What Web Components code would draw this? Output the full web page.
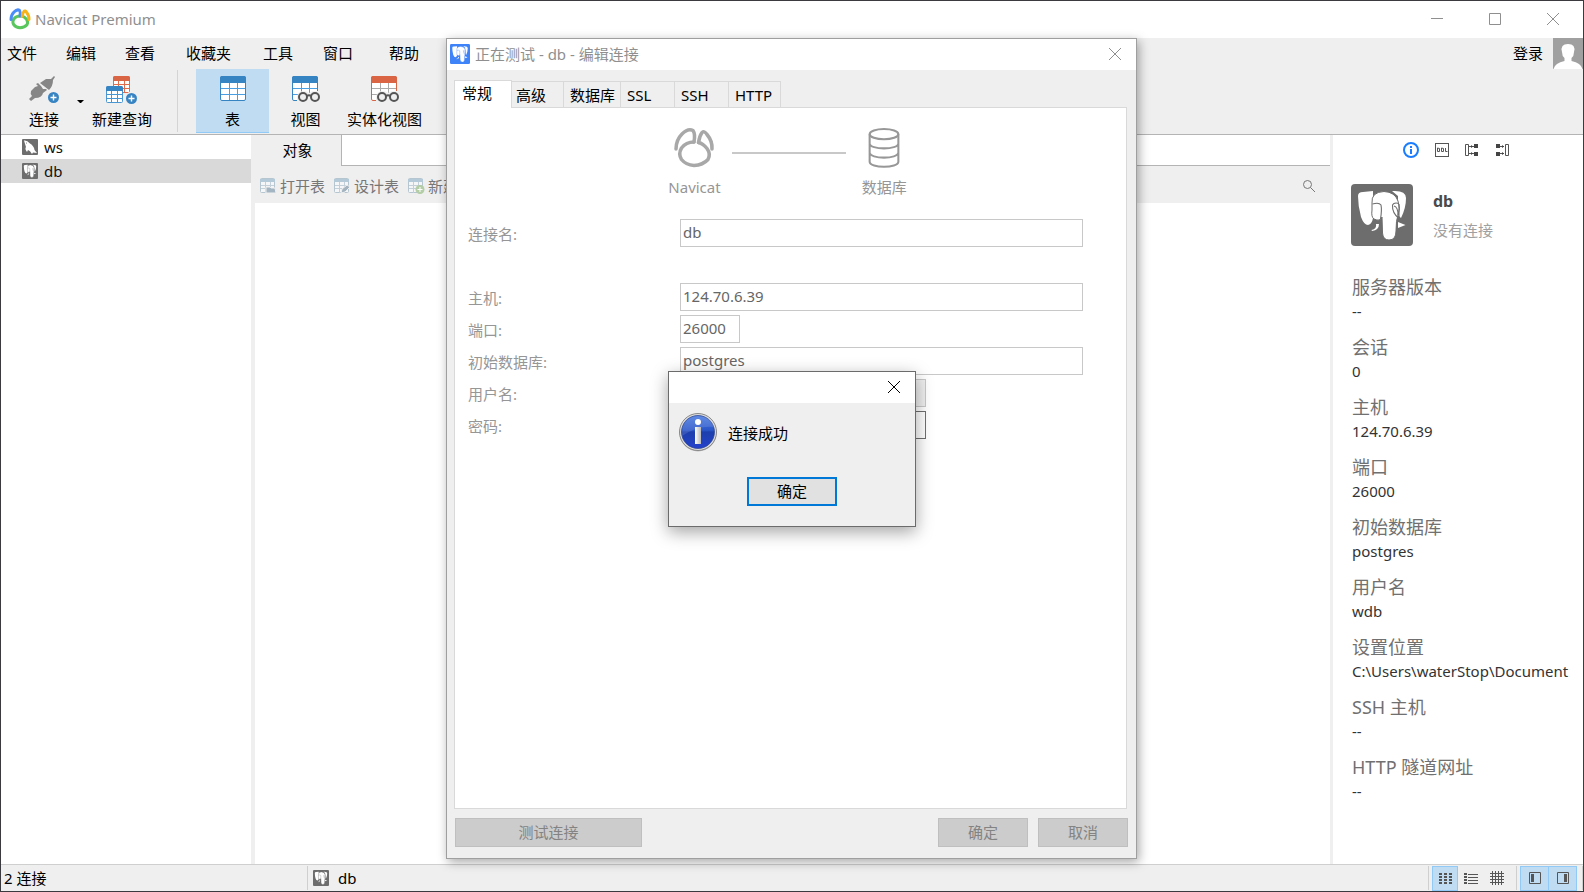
<!DOCTYPE html>
<html lang="zh-CN">
<head>
<meta charset="utf-8">
<title>Navicat Premium</title>
<style>
  html, body { margin: 0; height: 100%; }
  body { font: 15px/20px "Noto Sans", "Noto Sans CJK SC", sans-serif; color: #000; overflow: hidden; }
</style>
</head>
<body>
<app-window></app-window>
<script>
const define = (name, html, setup) => {
  const tpl = document.createElement('template');
  tpl.innerHTML = html;
  customElements.define(name, class extends HTMLElement {
    constructor() {
      super();
      this.attachShadow({ mode: 'open' }).append(tpl.content.cloneNode(true));
    }
    connectedCallback() { if (setup) setup(this, this.shadowRoot); }
  });
};

/* ---------- icons: [width, height, markup] ---------- */
const elephant = `
  <path fill="#fff" d="M7 12Q7 8 12 8L22 7L22 34Q21 40 17 41Q13 41 10 33Q7 22 7 12Z"/>
  <path fill="#fff" d="M41 7Q55 6 55 14Q55 24 50 34L47 31V12Z"/>
  <path fill="#fff" stroke="currentColor" stroke-width="1" d="M21 19Q20 8 33 7.500Q44 8 47 17Q50 25 47 31Q45 36 45 47Q45 56 38 56Q32 56 31.500 49L31 33Q29 38 23 35Q20 33 21 26Z"/>
  <path fill="none" stroke="currentColor" stroke-width="1.100" d="M21.500 20Q28 18 30 21Q31 26 29.500 35M48 19.500Q43 18 41.500 21Q41 29 48 34.500V20M43 22q4 1 4 9"/>
  <path fill="#fff" d="M25 40H28Q28 46 21 47L20.500 46Q26 45 25 40ZM47 38L54.500 41L47 44Z"/>`;
const table = (head, line, x, y, w, h) => `
  <rect x="${x + .5}" y="${y + .5}" width="${w - 1}" height="${h - 1}" rx="1" fill="#fff" stroke="${line}"/>
  <path fill="none" stroke="${line}" d="M${x} ${y + Math.round(h * .52) - .5}h${w}M${x} ${y + Math.round(h * .76) - .5}h${w}M${x + Math.round(w / 3) - .5} ${y + 3}v${h - 3}M${x + Math.round(w * .64) + .5} ${y + 3}v${h - 3}"/>
  <path fill="${head}" d="M${x} ${y + 5}V${y + 2}q0-2 2-2h${w - 4}q2 0 2 2v3z"/>`;
const plus = (x, y) => `<circle cx="${x}" cy="${y}" r="5.5" fill="#3784c3"/><path d="M${x - 3} ${y}h6M${x} ${y - 3}v6" stroke="#fff" stroke-width="1.4"/>`;
const glasses = `<g fill="#efefef" stroke="#555" stroke-width="2"><circle cx="11" cy="21" r="4"/><circle cx="23" cy="21" r="4"/><path d="M15 20q2-1.500 4 0" fill="none"/></g>`;
const view = (head, line, inner) => `
  <rect x=".5" y=".5" width="25" height="24" rx="1.500" fill="#fff" stroke="${line}"/>
  <path stroke="${inner}" fill="none" d="M1 12.500h24M1 18.500h24M9.500 7v18M17.500 7v18"/>
  <path fill="${head}" d="M0 7V2q0-2 2-2h22q2 0 2 2v5z"/>
  <path fill="#efefef" d="M5 21q1-6 6-6 4 0 6 2 2-2 6-2h5v12H5z"/>${glasses}`;
const grey = (extra) => `<rect x=".5" y=".5" width="14" height="14" rx="1" fill="#f4f6f7" stroke="#b6c6d0"/><path fill="#b4cad8" d="M0 1h15v3H0z"/><path fill="none" stroke="#c3d0d9" d="M1 7.500h13M1 10.500h13M5.500 4v11M10.500 4v11"/>${extra}`;
const swirl = (a, b, c, w) => `<g fill="none" stroke-width="${w}" stroke-linejoin="round" stroke-linecap="round">
  <path stroke="${c}" d="M20 14Q12 14 7.500 20Q4 26 7.500 31.500Q12 37 20 37.500Q29 37 34 31.500Q37 26 33 20.500Q29 15.500 24.500 14.500"/>
  <path stroke="${a}" d="M2 21Q2 12 8 6Q14 0 19 2.500Q21.500 6 20 14"/>
  <path stroke="${b}" d="M24.500 14.500Q25.500 8 28 4.500Q30.500 2.500 33 6.500Q38.500 13 38 21"/></g>`;
const ICONS = {
  '': [0, 0, ''],
  logo: [40, 40, swirl('#4a8df8', '#f7b318', '#58c65d', 6)],
  swirl: [40, 40, swirl('#a8a8a8', '#a8a8a8', '#a8a8a8', 3.5)],
  pg: [62, 62, `<rect width="62" height="62" rx="4" fill="currentColor"/>${elephant}`],
  mysql: [16, 16, `<rect width="16" height="16" rx="1" fill="#6d6d6d"/><path fill="#fff" d="M2 1.500Q5 1 8 4.500Q12 7 12.500 11L15 14L11 13.500L10 15Q8 11.500 6 11L5 13Q2.500 10 4 8Q3 5 2 1.500Z"/><circle cx="4.500" cy="4" r=".5" fill="#666"/>`],
  plug: [30, 28, `<g fill="#868686"><path d="M11 7L17 3L22 3L25 0L26 1L24 4Q24 10 20 14Z"/><path d="M2 15L6 11L9 10L7 8L9 7L12 10L14 13L17 13L18 14L14 17Q13 22 6 22L2 25L0 23L3 20Q1 18 2 15Z"/></g>${plus(24.5, 21.5)}`],
  query: [32, 28, `${table('#d96545', '#e06c4c', 7, 0, 17, 17)}${table('#3784c3', '#4a96d2', 0, 10, 17, 17)}<circle cx="26" cy="22.500" r="7" fill="#efefef"/>${plus(25.5, 22.5)}`],
  table: [26, 26, `<rect x=".5" y=".5" width="25" height="24" rx="1.500" fill="#fff" stroke="#3784c3"/><path stroke="#4b9fe0" fill="none" d="M1 12.500h24M1 18.500h24M9.500 7v17M17.500 7v17"/><path fill="#3784c3" d="M0 7V2q0-2 2-2h22q2 0 2 2v5z"/>`],
  view: [28, 26, view('#3784c3', '#3784c3', '#4b9fe0')],
  mview: [28, 26, view('#d96545', '#d96545', '#aaa')],
  open: [16, 16, grey('<path fill="#a3b5c2" stroke="#efefef" d="M6 15V9h4l1 1h4l1 5z"/>')],
  design: [16, 16, grey('<path fill="#a3b3c0" stroke="#efefef" d="M7 15l1-4 5-4 3 2-5 5z"/>')],
  create: [16, 16, grey('<circle cx="12" cy="11.500" r="4.500" fill="#b3cda6"/><path stroke="#fff" d="M9.500 11.500h5M12 9v5"/>')],
  search: [14, 14, `<g fill="none" stroke="#777"><circle cx="5.500" cy="5.500" r="4"/><path d="M8.500 8.500L13 13"/></g>`],
  min: [12, 12, '<path d="M0 5.500h12" stroke="currentColor"/>'],
  max: [12, 12, '<path d="M.5.500h11v11H.5z" fill="none" stroke="currentColor"/>'],
  close: [12, 12, '<path d="M0 0L12 12M12 0L0 12" stroke="currentColor" fill="none"/>'],
  avatar: [30, 31, `<rect width="30" height="31" fill="#a0a0a0"/><path fill="#fff" d="M9 14Q7 6 15 6Q23 6 21 14Q21 18 18.500 20V23Q28 25 29.500 31H.5Q2 25 11.500 23V20Q9 18 9 14Z"/>`],
  db: [30, 39, `<g fill="none" stroke="#979797" stroke-width="2"><ellipse cx="15" cy="6" rx="14" ry="5"/><path d="M1 6v27c0 6.500 28 6.500 28 0V6M1 15c0 6.500 28 6.500 28 0M1 24c0 6.500 28 6.500 28 0"/></g>`],
  info: [16, 16, `<circle cx="8" cy="8" r="7" fill="none" stroke="#1a7dff" stroke-width="2"/><path fill="#1a7dff" d="M7 4h2v2H7zM7 7h2v5H7z"/>`],
  ddl: [14, 14, `<rect x=".5" y=".5" width="13" height="13" fill="none" stroke="#555"/><path fill="none" stroke="#555" d="M2.500 5v3.500h2v-3zM6.500 5v3.500h2v-3zM10.500 5v3.500h2"/>`],
  from: [14, 12, `<path fill="none" stroke="#555" d="M.5.500h3v11h-3zM4 2.500h6M4 9.500h6"/><path fill="#444" d="M9 0h4v4H9zM9 8h4v4H9zM6 1v3l2-1.500zM6 8v3l2-1.500z"/>`],
  to: [14, 12, `<path fill="none" stroke="#555" d="M10.500.500h3v11h-3zM4 2.500h5M4 9.500h5"/><path fill="#444" d="M1 0h4v4H1zM1 8h4v4H1zM7 1v3l2-1.500zM7 8v3l2-1.500z"/>`],
  tiles: [13, 11, `<path fill="#555" d="M0 0h3v2H0zM5 0h3v2H5zM10 0h3v2h-3zM0 3h3v2H0zM5 3h3v2H5zM10 3h3v2h-3zM0 6h3v2H0zM5 6h3v2H5zM10 6h3v2h-3zM0 9h3v2H0zM5 9h3v2H5zM10 9h3v2h-3z"/>`],
  list: [14, 11, `<path fill="#555" d="M0 0h3v2H0zM0 3h3v2H0zM0 6h3v2H0zM0 9h3v2H0zM4 1h10v1H4zM4 4h10v1H4zM4 7h10v1H4zM4 10h10v1H4z"/>`],
  grid: [14, 14, `<path fill="none" stroke="#555" d="M2.500 0v14M5.500 0v14M8.500 0v14M11.500 0v14M0 2.500h14M0 5.500h14M0 8.500h14M0 11.500h14"/>`],
  left: [12, 12, `<path fill="none" stroke="#555" d="M.5.500h11v11H.5z"/><path fill="#555" d="M2 2h3v8H2z"/>`],
  right: [12, 12, `<path fill="none" stroke="#555" d="M.5.500h11v11H.5z"/><path fill="#555" d="M7 2h3v8H7z"/>`],
  notice: [40, 40, `<defs><linearGradient id="g" x2="0" y2="1"><stop offset="0" stop-color="#4a7be0"/><stop offset=".45" stop-color="#2a55c8"/><stop offset=".5" stop-color="#1d3fac"/><stop offset="1" stop-color="#2442cc"/></linearGradient><linearGradient id="s" x2="1"><stop offset="0" stop-color="#fff"/><stop offset="1" stop-color="#bbb"/></linearGradient></defs>
    <circle cx="20" cy="21" r="18.500" fill="#999" opacity=".6"/><circle cx="20" cy="20" r="18.500" fill="#ddd" stroke="#888"/><circle cx="20" cy="20" r="16.500" fill="url(#g)" stroke="#26408c" stroke-width=".7"/><path d="M4 24Q3 5 20 4Q34 5 36 15Q20 13 4 24Z" fill="#fff" opacity=".12"/><circle cx="20" cy="10" r="3" fill="#fff"/><path fill="url(#s)" d="M17 15h6v17h-6z"/>`],
};
define('nav-icon', `<style>:host{display:block;flex:none;line-height:0}</style><div></div>`, (el, root) => {
  const [w, h, markup] = ICONS[el.getAttribute('name') || ''];
  const size = el.getAttribute('size');
  root.querySelector('div').innerHTML =
    `<svg width="${size || w}" height="${size || h}" viewBox="0 0 ${w} ${h}" style="display:block;overflow:visible" aria-hidden="true">${markup}</svg>`;
});

/* ---------- title bar ---------- */
define('title-bar', `<style>
  :host{display:flex;align-items:center;height:36px;background:#fff;color:#8f8f8f;padding:0 24px 1px 9px}
  h1{font:inherit;margin:0 auto 0 5px}
  .ctl{display:flex;gap:46px}
  button{border:0;background:none;padding:0;color:inherit;display:block}
</style>
<nav-icon name="logo" size="20"></nav-icon><h1>Navicat Premium</h1>
<div class="ctl">
  <button aria-label="最小化"><nav-icon name="min"></nav-icon></button>
  <button aria-label="最大化"><nav-icon name="max"></nav-icon></button>
  <button aria-label="关闭"><nav-icon name="close"></nav-icon></button>
</div>`);

/* ---------- menu bar ---------- */
define('menu-bar', `<style>
  :host{display:flex;justify-content:space-between;height:31px}
  nav{display:grid;grid-template-columns:59px 59px 61px 77px 60px 66px auto;align-items:center;padding:0 0 2px 6px}
  button{font:inherit;color:inherit;border:0;background:none;padding:0;text-align:left}
  .user{display:flex;gap:10px}
  .user span{line-height:31px}
</style>
<nav><button>文件</button><button>编辑</button><button>查看</button><button>收藏夹</button><button>工具</button><button>窗口</button><button>帮助</button></nav>
<button class="user"><span>登录</span><nav-icon name="avatar"></nav-icon></button>`);

/* ---------- large toolbar button ---------- */
define('tool-button', `<style>
  :host{display:block;width:73px}
  button{font:inherit;color:inherit;border:0;border-bottom:1px solid transparent;background:none;padding:7px 0 0;margin:0;width:100%;height:64px;display:flex;flex-direction:column;align-items:center;justify-content:space-between;white-space:nowrap}
  span{height:23px}
  :host([active]) button{background:#c0dcf3;border-color:#91c9f7}
</style><button><nav-icon></nav-icon><span><slot></slot></span></button>`, (el, root) => {
  const icon = document.createElement('nav-icon');
  icon.setAttribute('name', el.getAttribute('icon'));
  root.querySelector('nav-icon').replaceWith(icon);
});

define('main-toolbar', `<style>
  :host{display:flex;height:65px;padding-left:10px;border-bottom:1px solid #b4b4b4}
  .s{width:66px}.m{width:76px}.l{width:85px}
  .drop{align-self:center;border:0;background:none;padding:0;width:7px}
  .drop::before{content:"";display:block;border:3px solid transparent;border-top-color:#000;border-bottom:0}
  hr{border:0;width:1px;height:62px;background:#d4d4d4;margin:1px 18px 0 17px}
</style>
<tool-button class="s" icon="plug">连接</tool-button><button class="drop" aria-label="更多连接"></button>
<tool-button class="m" icon="query">新建查询</tool-button><hr>
<tool-button active icon="table">表</tool-button><tool-button icon="view">视图</tool-button><tool-button class="l" icon="mview">实体化视图</tool-button>`);

/* ---------- connection tree ---------- */
define('connection-tree', `<style>
  :host{display:block;width:250px;background:#fff;border-right:4px solid #efefef}
  ul{list-style:none;margin:0;padding:0}
  li{display:flex;align-items:center;gap:6px;height:24px;padding-left:21px;color:#111}
  nav-icon{color:#6d6d6d}
  .on{background:#d9d9d9}
</style><ul><li><nav-icon name="mysql"></nav-icon>ws</li><li class="on"><nav-icon name="pg" size="16"></nav-icon>db</li></ul>`);

/* ---------- object pane ---------- */
define('object-pane', `<style>
  :host{display:flex;flex-direction:column;flex:1;min-width:0;background:#fff}
  .tabs{display:flex;height:31px}
  .tab{font:inherit;border:0;background:#efefef;width:87px;padding:0 1px 2px 0;border-right:1px solid #b4b4b4}
  .rest{flex:1;border-bottom:1px solid #b4b4b4;box-sizing:border-box}
  .bar{display:flex;align-items:center;gap:9px;height:37px;box-sizing:border-box;background:#efefef;padding:3px 14px 0 5px}
  .bar button{display:flex;align-items:center;gap:4px;font:inherit;color:#777;background:none;border:0;padding:0}
  .find{margin-left:auto}
</style>
<div class="tabs"><button class="tab">对象</button><div class="rest"></div></div>
<div class="bar">
  <button><nav-icon name="open"></nav-icon>打开表</button><button><nav-icon name="design"></nav-icon>设计表</button><button><nav-icon name="create"></nav-icon>新建表</button>
  <button class="find" aria-label="查找"><nav-icon name="search"></nav-icon></button>
</div>`);

/* ---------- information pane ---------- */
define('info-item', `<style>
  :host{display:block;height:60px}
  h3{font:inherit;font-size:18px;line-height:24px;margin:0;color:#707070}
  p{margin:0;line-height:24px;color:#333;white-space:nowrap}
</style><h3></h3><p><slot></slot></p>`, (el, root) => { root.querySelector('h3').textContent = el.getAttribute('label'); });

define('info-pane', `<style>
  :host{display:block;width:253px;box-sizing:border-box;border-left:3px solid #efefef;background:#fff}
  .modes{display:flex;align-items:center;justify-content:center;gap:16px;padding-top:7px;margin-right:4px}
  .modes button{border:0;background:none;padding:0}
  .head{display:flex;gap:20px;padding:26px 0 0 18px}
  .head nav-icon{color:#6d6d6d}
  h2{font-size:16px;line-height:22px;margin:6px 0 8px;color:#4a4a4a}
  .head p{margin:0;color:#a0a0a0}
  .items{padding:29px 9px 0 19px}
</style>
<div class="modes">
  <button aria-label="常规"><nav-icon name="info"></nav-icon></button><button aria-label="DDL"><nav-icon name="ddl"></nav-icon></button>
  <button aria-label="使用"><nav-icon name="from"></nav-icon></button><button aria-label="使用者"><nav-icon name="to"></nav-icon></button>
</div>
<div class="head"><nav-icon name="pg"></nav-icon><div><h2>db</h2><p>没有连接</p></div></div>
<div class="items">
  <info-item label="服务器版本">--</info-item><info-item label="会话">0</info-item><info-item label="主机">124.70.6.39</info-item>
  <info-item label="端口">26000</info-item><info-item label="初始数据库">postgres</info-item><info-item label="用户名">wdb</info-item>
  <info-item label="设置位置">C:\\Users\\waterStop\\Document</info-item><info-item label="SSH 主机">--</info-item><info-item label="HTTP 隧道网址">--</info-item>
</div>`);

/* ---------- status bar ---------- */
define('status-bar', `<style>
  :host{display:flex;align-items:center;height:26px;background:#efefef;border-top:1px solid #cfcfcf;padding-left:3px}
  .count{width:303px}
  hr{border:0;width:1px;height:24px;background:#cfcfcf;margin:0}
  nav-icon{color:#6d6d6d}
  .cur{display:flex;align-items:center;gap:9px;margin-right:auto;padding-left:5px}
  button{display:flex;align-items:center;justify-content:center;height:25px;box-sizing:border-box;border:1px solid transparent;background:none;padding:0}
  .on{background:#c0dcf3;border-color:#91c9f7}
  .views{display:flex;padding:0 6px 0 3px}
  .views button{width:26px}
  .sides{display:flex;padding:0 5px 0 3px}
  .sides button{width:29px}
  .sides button+button{margin-left:-1px}
</style>
<span class="count">2 连接</span><hr><span class="cur"><nav-icon name="pg" size="16"></nav-icon>db</span>
<hr><div class="views"><button class="on" aria-label="图标"><nav-icon name="tiles"></nav-icon></button><button aria-label="列表"><nav-icon name="list"></nav-icon></button><button aria-label="详细信息"><nav-icon name="grid"></nav-icon></button></div>
<hr><div class="sides"><button class="on" aria-label="导航窗格"><nav-icon name="left"></nav-icon></button><button class="on" aria-label="信息窗格"><nav-icon name="right"></nav-icon></button></div><hr>`);

/* ---------- connection dialog ---------- */
define('form-field', `<style>
  :host{display:grid;grid-template-columns:212px 403px;height:28px;margin-bottom:4px;color:#969696}
  label{line-height:31px}
  input{font:inherit;color:#666;width:100%;height:28px;box-sizing:border-box;border:1px solid #c8c8c8;border-radius:0;background:#fff;padding:0 2px 2px;outline:0}
  :host([size=s]) input{width:60px}
  :host([size=m]) input{width:246px}
  input:disabled{background:#efefef}
  :host([focused]) input{border-color:#6f6f6f}
</style><label for="f"></label><input id="f">`, (el, root) => {
  root.querySelector('label').textContent = el.getAttribute('label');
  const input = root.querySelector('input');
  input.value = el.getAttribute('value') || '';
  input.type = el.getAttribute('type') || 'text';
  input.disabled = el.hasAttribute('disabled');
});

define('connection-dialog', `<style>
  :host{display:flex;flex-direction:column;width:691px;box-sizing:border-box;border:1px solid #9f9f9f;background:#efefef;box-shadow:2px 3px 10px rgba(0,0,0,.35)}
  header{display:flex;align-items:center;gap:5px;height:30px;padding:0 15px 1px 3px;background:#fff;color:#8f8f8f}
  header nav-icon{color:#3f83f8}
  h2{font:inherit;margin:0 auto 0 0}
  button{font:inherit;padding:0;border-radius:0}
  .x{border:0;background:none}
  .x nav-icon{color:#8f8f8f}
  .tabs{display:flex;align-items:flex-end;padding:10px 0 0 7px}
  .tabs button{box-sizing:border-box;height:26px;border:1px solid #d9d9d9;border-width:1px 1px 0 0;background:#efefef;text-align:left;padding-left:6px}
  .tabs .on{height:28px;width:58px;background:#fff;border-left-width:1px;margin-bottom:-1px;padding:0 0 4px 7px;position:relative}
  .panel{flex:1;border:1px solid #d9d9d9;background:#fff;margin:0 9px 0 7px}
  .tabs .w{width:52px;padding-left:4px}
  .k{width:57px}.n{width:54px}.h{width:52px}
  .route{display:flex;justify-content:center;padding:20px 6px 0 0;color:#969696;text-align:center}
  figure{margin:0;display:flex;flex-direction:column;align-items:center;gap:9px}
  .line{width:114px;height:2px;background:#c8c8c8;margin:24px 16px 0 11px}
  form{padding:22px 0 0 13px}
  .gap{height:32px}
  footer{display:flex;gap:10px;padding:9px 8px 11px}
  footer button{width:90px;height:29px;border:1px solid #bfbfbf;background:#ccc;color:#838383;padding-bottom:1px}
  footer .test{width:187px;margin-right:auto}
</style>
<header><nav-icon name="pg" size="20"></nav-icon><h2>正在测试 - db - 编辑连接</h2><button class="x" aria-label="关闭"><nav-icon name="close"></nav-icon></button></header>
<div class="tabs" role="tablist"><button class="on" role="tab">常规</button><button class="w" role="tab">高级</button><button class="k" role="tab">数据库</button><button class="n" role="tab">SSL</button><button class="n" role="tab">SSH</button><button class="h" role="tab">HTTP</button></div>
<div class="panel">
  <div class="route"><figure><nav-icon name="swirl"></nav-icon><figcaption>Navicat</figcaption></figure><div class="line"></div><figure><nav-icon name="db" size="40"></nav-icon><figcaption>数据库</figcaption></figure></div>
  <form>
    <form-field label="连接名:" value="db"></form-field><div class="gap"></div>
    <form-field label="主机:" value="124.70.6.39"></form-field><form-field label="端口:" value="26000" size="s"></form-field>
    <form-field label="初始数据库:" value="postgres"></form-field><form-field label="用户名:" size="m" disabled></form-field>
    <form-field label="密码:" size="m" type="password" focused></form-field>
  </form>
</div>
<footer><button class="test">测试连接</button><button>确定</button><button>取消</button></footer>`);

/* ---------- message box ---------- */
define('message-box', `<style>
  :host{display:block;width:248px;box-sizing:border-box;border:1px solid #6b6b6b;background:#efefef;box-shadow:0 5px 16px rgba(0,0,0,.36)}
  header{display:flex;justify-content:flex-end;align-items:center;height:30px;padding:0 15px 1px 0;background:#fff}
  header button{border:0;background:none;padding:0;color:#000}
  .msg{display:flex;align-items:center;gap:10px;padding:9px 0 0 9px}
  p{margin:2px 0 0}
  .ok{display:block;font:inherit;width:90px;height:29px;margin:25px auto 20px 78px;border:2px solid #0078d7;background:#e1e1e1;border-radius:0;padding:0 0 1px}
</style>
<header><button aria-label="关闭"><nav-icon name="close"></nav-icon></button></header>
<div class="msg"><nav-icon name="notice"></nav-icon><p><slot></slot></p></div><button class="ok">确定</button>`);

/* ---------- main window ---------- */
define('app-window', `<style>
  :host{display:flex;flex-direction:column;height:100vh;min-height:600px;box-sizing:border-box;border:1px solid #3b3a3e;background:#efefef;position:relative}
  main{display:flex;flex:1;min-height:0}
  connection-dialog{position:absolute;top:37px;bottom:32px;left:calc(50% - 346px)}
  message-box{position:absolute;top:370px;left:calc(50% - 124px)}
</style>
<title-bar></title-bar><menu-bar></menu-bar><main-toolbar></main-toolbar>
<main><connection-tree></connection-tree><object-pane></object-pane><info-pane></info-pane></main>
<status-bar></status-bar>
<connection-dialog role="dialog"></connection-dialog><message-box role="alertdialog">连接成功</message-box>`);
</script>
</body>
</html>
